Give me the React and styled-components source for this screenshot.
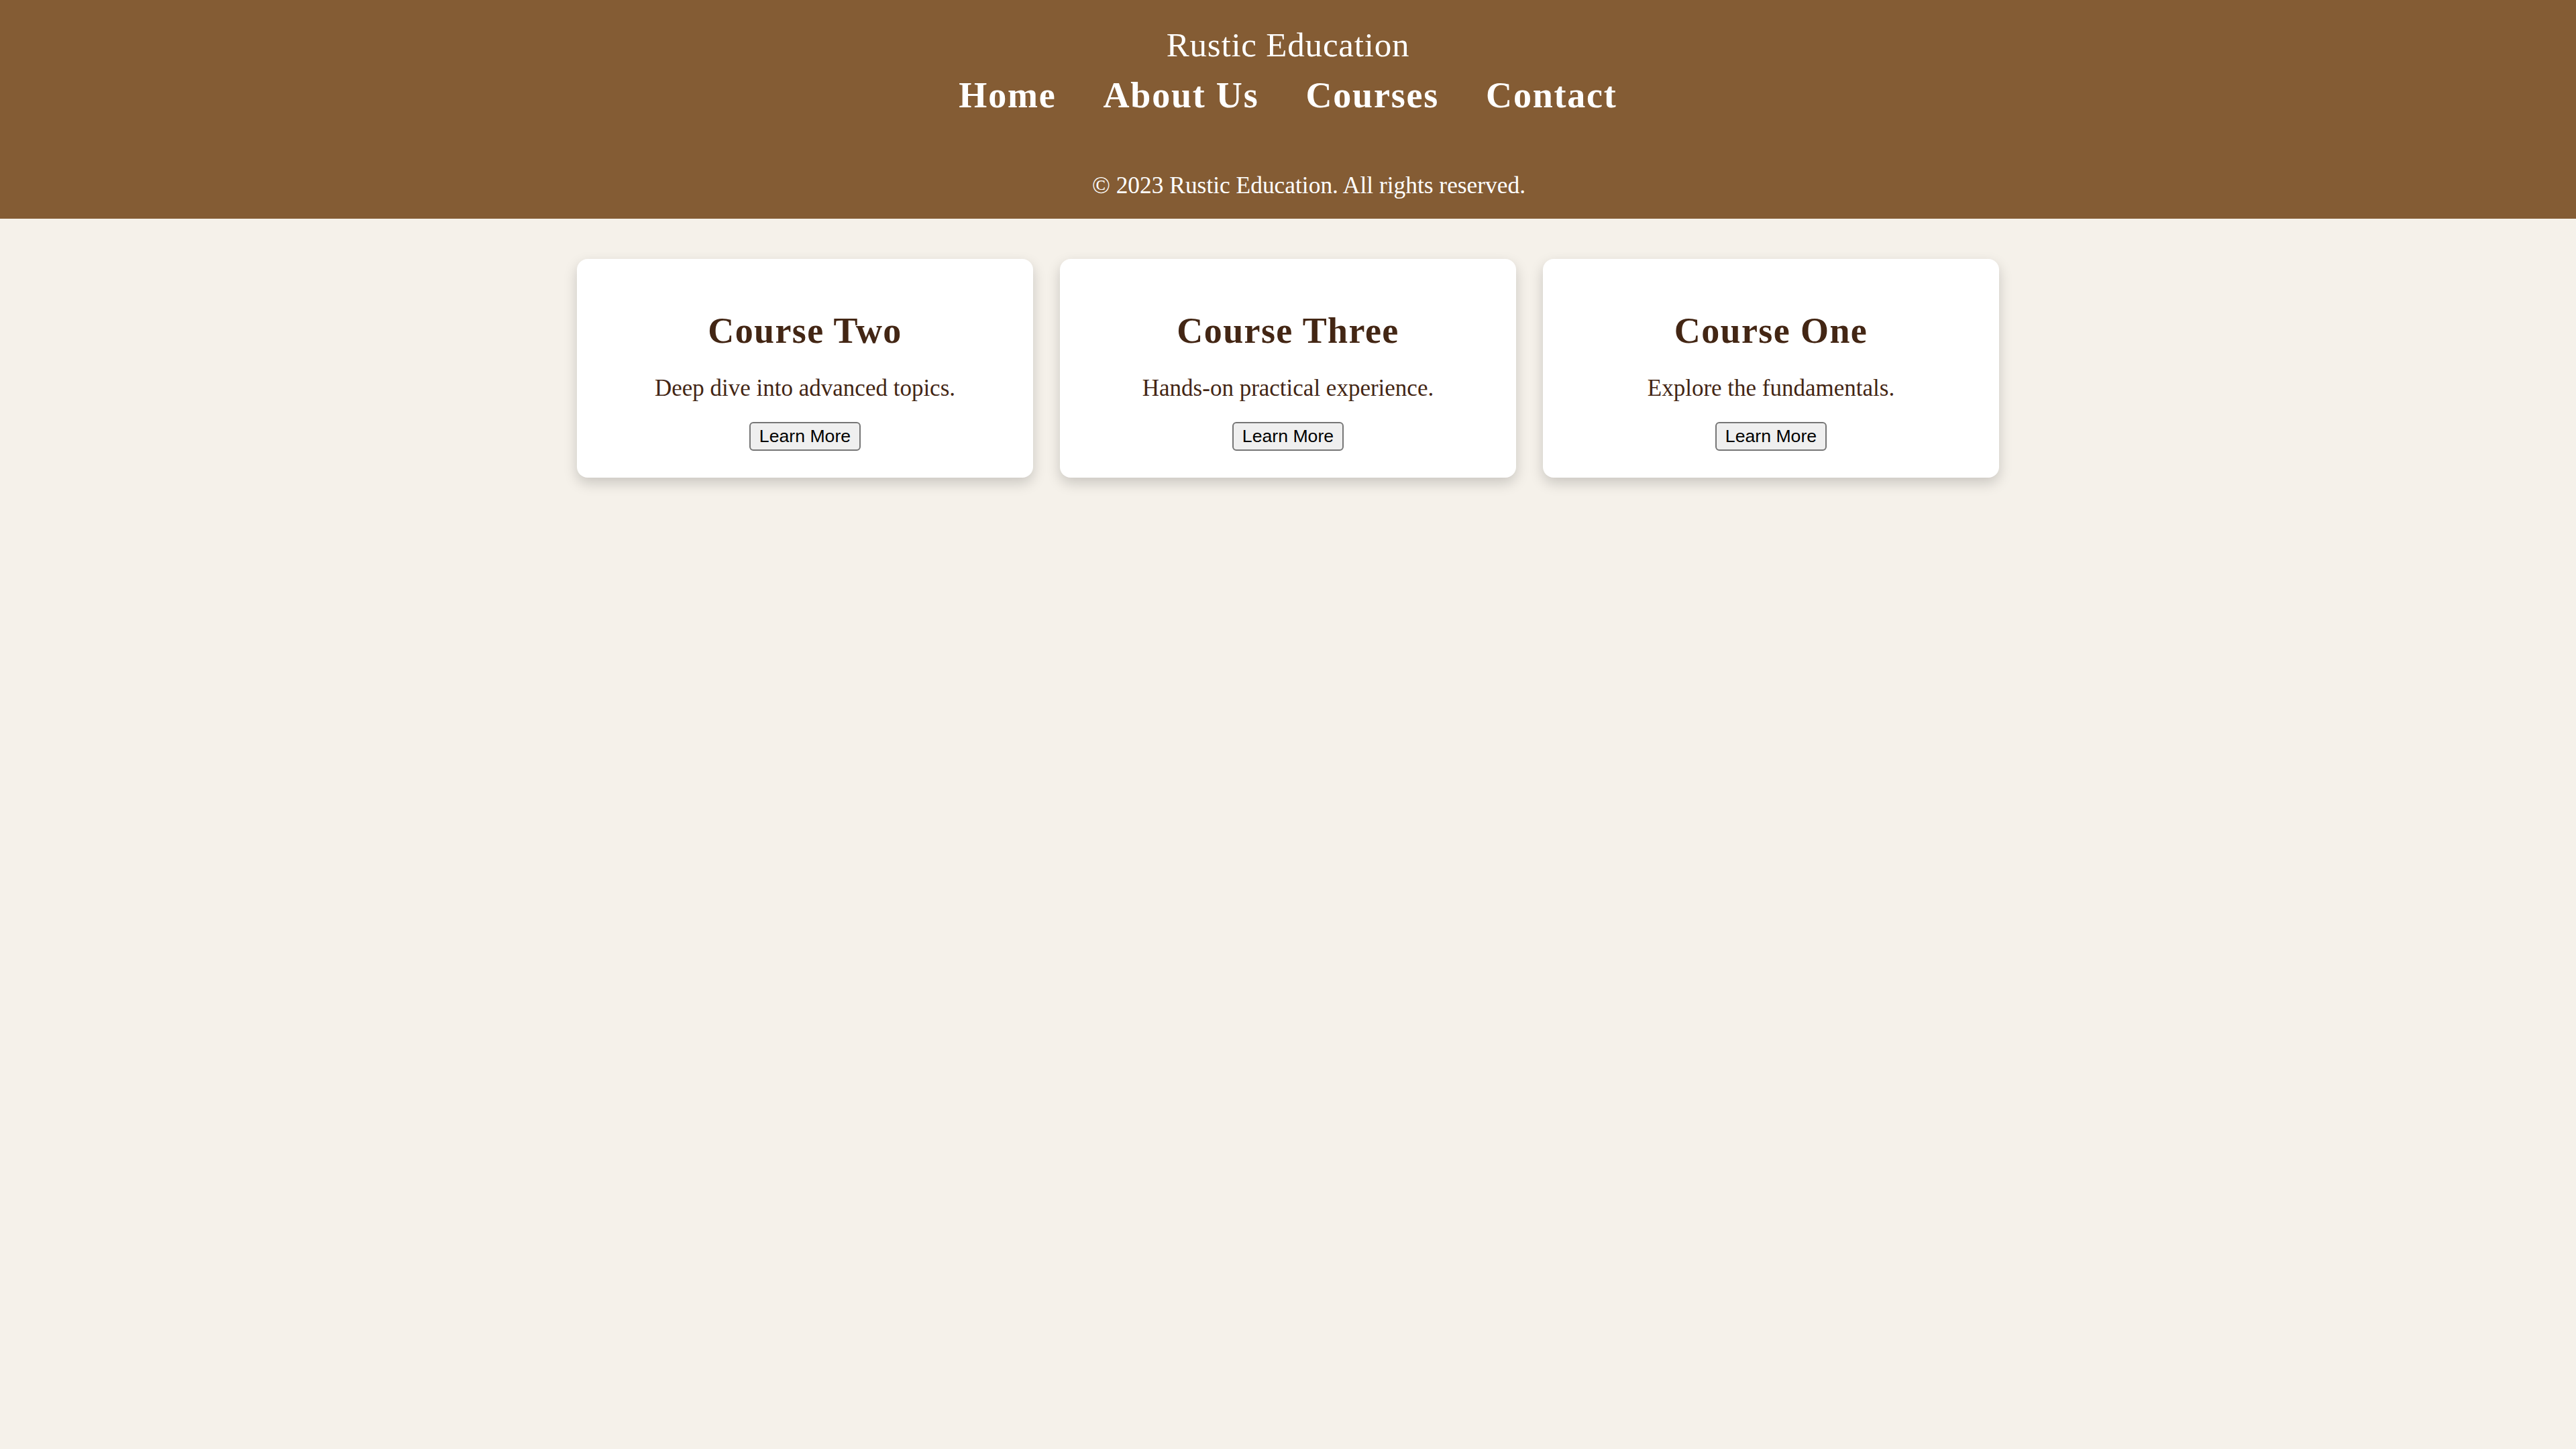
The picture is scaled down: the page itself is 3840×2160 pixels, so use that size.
import React from "react";
import styled, { createGlobalStyle } from "styled-components";

const GlobalStyle = createGlobalStyle`
  html, body {
    margin: 0;
    padding: 0;
    background: #f5f1ea;
    font-family: "Liberation Serif", "Times New Roman", serif;
  }
  #root {
    min-height: 100vh;
  }
`;

const Page = styled.div`
  min-height: 100vh;
  background: #f5f1ea;
`;

const Header = styled.header`
  background: #845c34;
  color: #ffffff;
  text-align: center;
  padding: 40px 0 31px;
`;

const Brand = styled.div`
  font-size: 51px;
  line-height: 55px;
  letter-spacing: 0.8px;
`;

const Nav = styled.nav`
  display: flex;
  justify-content: center;
  gap: 70px;
  margin-top: 20px;
`;

const NavLink = styled.a`
  color: #ffffff;
  text-decoration: none;
  font-weight: 700;
  font-size: 54px;
  line-height: 55px;
  letter-spacing: 1.8px;
`;

const Copyright = styled.p`
  margin: 88px 0 0;
  padding-left: 62px;
  font-size: 35.4px;
  line-height: 37px;
`;

const Main = styled.main`
  display: flex;
  justify-content: center;
  gap: 40px;
  padding-top: 60px;
`;

const Card = styled.div`
  width: 680px;
  box-sizing: border-box;
  background: #ffffff;
  border-radius: 16px;
  padding: 40px;
  text-align: center;
  color: #432614;
  box-shadow: 0 8px 20px rgba(0, 0, 0, 0.18);
`;

const CardTitle = styled.h2`
  margin: 40px 0;
  font-size: 54px;
  line-height: 55px;
  font-weight: 700;
  letter-spacing: 1.4px;
`;

const CardText = styled.p`
  margin: 0 0 32px;
  font-size: 35px;
  line-height: 36px;
`;

const Button = styled.button`
  font-family: "Liberation Sans", Arial, sans-serif;
  font-size: 26.67px;
  line-height: 31px;
  padding: 4px 13px;
  color: #000000;
  background: #efefef;
  border: 2px solid #767676;
  border-radius: 6px;
  cursor: pointer;
`;

const courses = [
  { title: "Course Two", text: "Deep dive into advanced topics." },
  { title: "Course Three", text: "Hands-on practical experience." },
  { title: "Course One", text: "Explore the fundamentals." },
];

export default function App() {
  return (
    <Page>
      <GlobalStyle />
      <Header>
        <Brand>Rustic Education</Brand>
        <Nav>
          <NavLink href="#">Home</NavLink>
          <NavLink href="#">About Us</NavLink>
          <NavLink href="#">Courses</NavLink>
          <NavLink href="#">Contact</NavLink>
        </Nav>
        <Copyright>© 2023 Rustic Education. All rights reserved.</Copyright>
      </Header>
      <Main>
        {courses.map((c) => (
          <Card key={c.title}>
            <CardTitle>{c.title}</CardTitle>
            <CardText>{c.text}</CardText>
            <Button>Learn More</Button>
          </Card>
        ))}
      </Main>
    </Page>
  );
}
